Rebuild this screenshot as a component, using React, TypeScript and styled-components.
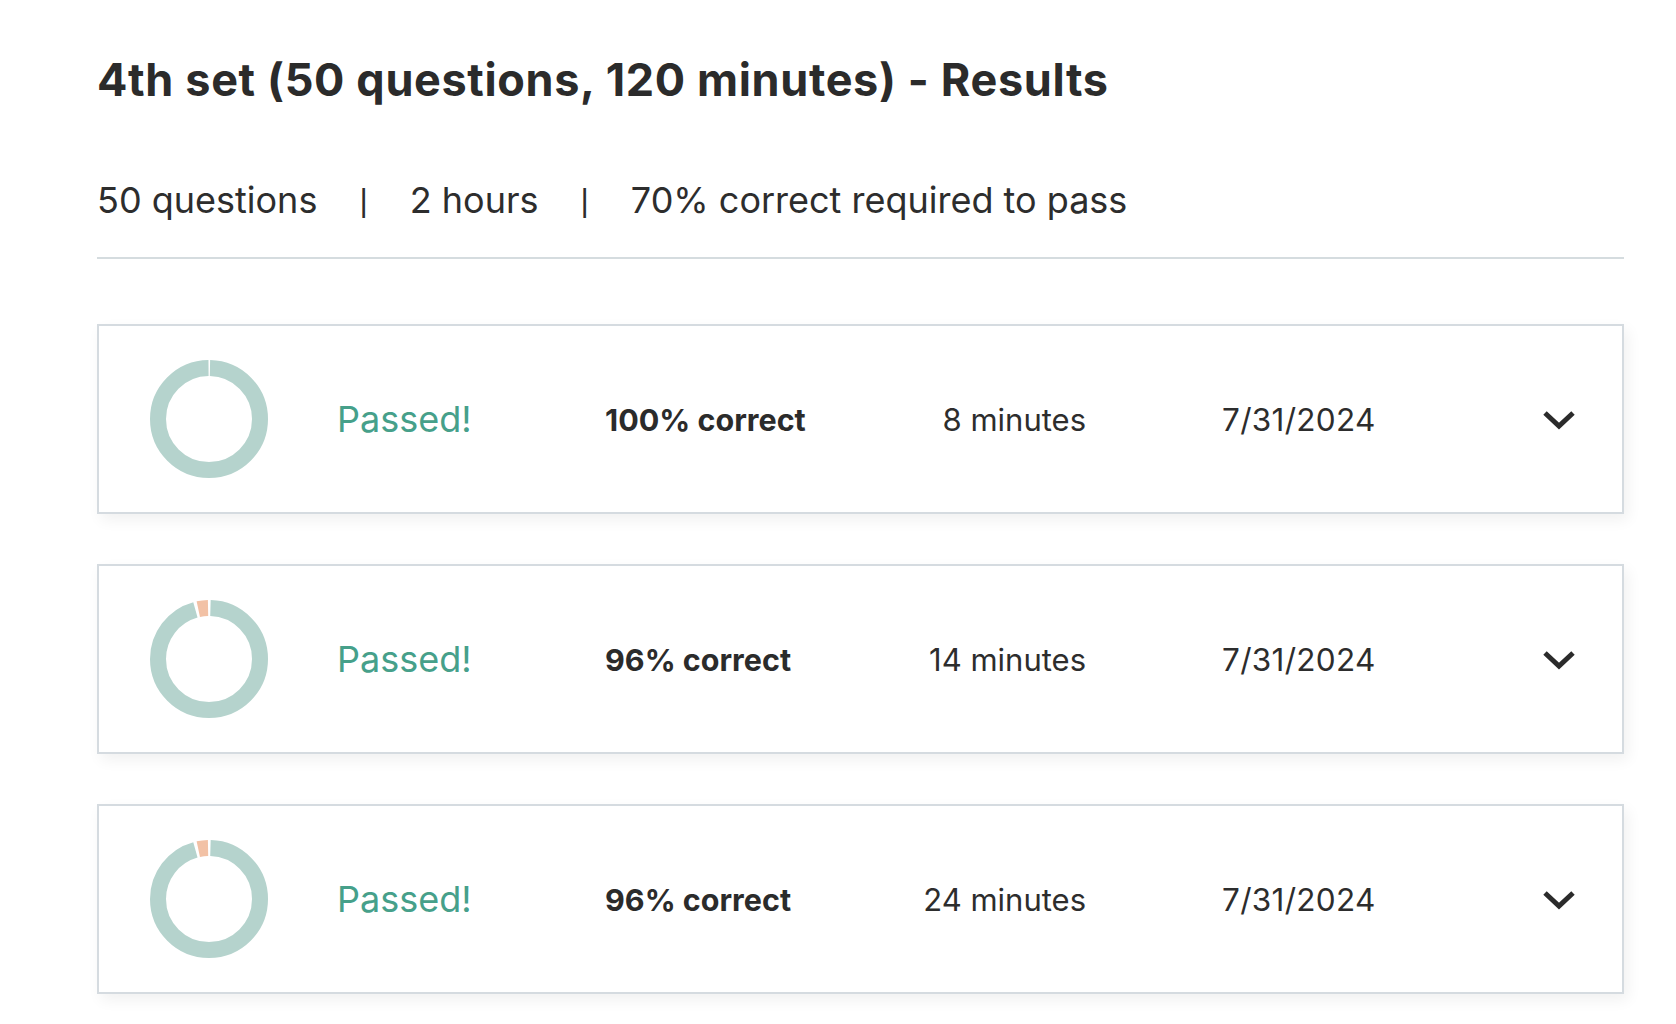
import React from 'react';
import styled, {createGlobalStyle} from 'styled-components';

const GlobalStyle = createGlobalStyle`
  html, body {
    margin: 0;
    padding: 0;
    background: #ffffff;
  }
  body {
    font-family: Inter, "Noto Sans", "Liberation Sans", sans-serif;
    color: #2d2d2d;
  }
`;

interface Attempt {
  score: number;
  minutes: number;
  date: string;
}

const attempts: Attempt[] = [
  {score: 100, minutes: 8, date: '7/31/2024'},
  {score: 96, minutes: 14, date: '7/31/2024'},
  {score: 96, minutes: 24, date: '7/31/2024'},
];

const RADIUS = 51;
const STROKE = 16;
const CIRC = 2 * Math.PI * RADIUS;
const GAP = 3;

const ScoreDonut = ({score}: {score: number}) => {
  const correctLen = (CIRC * score) / 100;
  const wrongLen = CIRC - correctLen;
  const gap = score === 100 ? 2 : GAP;
  return (
    <svg width="118" height="118" viewBox="0 0 118 118">
      <g transform="rotate(-90 59 59)">
        <circle
          cx="59"
          cy="59"
          r={RADIUS}
          fill="none"
          stroke="#b5d3cd"
          strokeWidth={STROKE}
          strokeDasharray={`${correctLen - gap} ${CIRC}`}
          strokeDashoffset={-gap / 2}
        />
        {wrongLen > 0 && (
          <circle
            cx="59"
            cy="59"
            r={RADIUS}
            fill="none"
            stroke="#f2c1a5"
            strokeWidth={STROKE}
            strokeDasharray={`${wrongLen - gap} ${CIRC}`}
            strokeDashoffset={-(correctLen + gap / 2)}
          />
        )}
      </g>
    </svg>
  );
};

const Chevron = () => (
  <svg width="34" height="26" viewBox="0 0 34 26">
    <path d="M3 7 L17 20 L31 7" fill="none" stroke="#2b2b2b" strokeWidth="5" strokeLinecap="butt" strokeLinejoin="miter" />
  </svg>
);

export default function App() {
  return (
    <>
      <GlobalStyle />
      <Page>
        <Title>4th set (50 questions, 120 minutes) - Results</Title>
        <Meta>
          <span>50 questions</span>
          <Pipe>|</Pipe>
          <span>2 hours</span>
          <Pipe>|</Pipe>
          <span>70% correct required to pass</span>
        </Meta>
        <Divider />
        <AttemptList>
          {attempts.map((a, i) => (
            <Card key={i}>
              <DonutCell>
                <ScoreDonut score={a.score} />
              </DonutCell>
              <Status>Passed!</Status>
              <Score>{a.score}% correct</Score>
              <Duration>{a.minutes} minutes</Duration>
              <DateText>{a.date}</DateText>
              <Toggle aria-label="Expand">
                <Chevron />
              </Toggle>
            </Card>
          ))}
        </AttemptList>
      </Page>
    </>
  );
}

const Page = styled.div`
  padding: 53px 52px 40px 97px;
  width: 1527px;
`;

const Title = styled.h1`
  margin: 0;
  font-size: 45px;
  line-height: 54px;
  font-weight: 700;
  color: #2b2b2b;
  letter-spacing: 0.65px;
`;

const Meta = styled.div`
  margin-top: 71px;
  display: flex;
  align-items: center;
  font-size: 36px;
  line-height: 44px;
  color: #2d2d2d;
`;

const Pipe = styled.span`
  margin: 0 42px;
  font-weight: 300;
  font-size: 32px;
  font-family: "Liberation Sans", sans-serif;
`;

const Divider = styled.hr`
  margin: 35px 0 0;
  border: none;
  height: 2px;
  background: #d5dcdf;
`;

const AttemptList = styled.div`
  margin-top: 65px;
  display: flex;
  flex-direction: column;
  gap: 50px;
`;

const Card = styled.div`
  box-sizing: border-box;
  height: 190px;
  border: 2px solid #d5dbe0;
  background: #fff;
  box-shadow: 4px 6px 14px rgba(0, 0, 0, 0.06);
  padding: 0 46px 0 51px;
  display: grid;
  grid-template-columns: 187px 268px 281px 200px 1fr 34px;
  align-items: center;
`;

const DonutCell = styled.div`
  display: flex;
  align-items: center;
`;

const Status = styled.div`
  font-size: 36px;
  color: #46a08a;
`;

const Score = styled.div`
  font-size: 30.5px;
  font-weight: 700;
  color: #2b2b2b;
`;

const Duration = styled.div`
  font-size: 31px;
  text-align: right;
`;

const DateText = styled.div`
  font-size: 31.5px;
  letter-spacing: 0.3px;
  padding-left: 136px;
`;

const Toggle = styled.button`
  border: none;
  background: none;
  padding: 0;
  display: flex;
  align-items: center;
  justify-content: center;
  cursor: pointer;
`;
